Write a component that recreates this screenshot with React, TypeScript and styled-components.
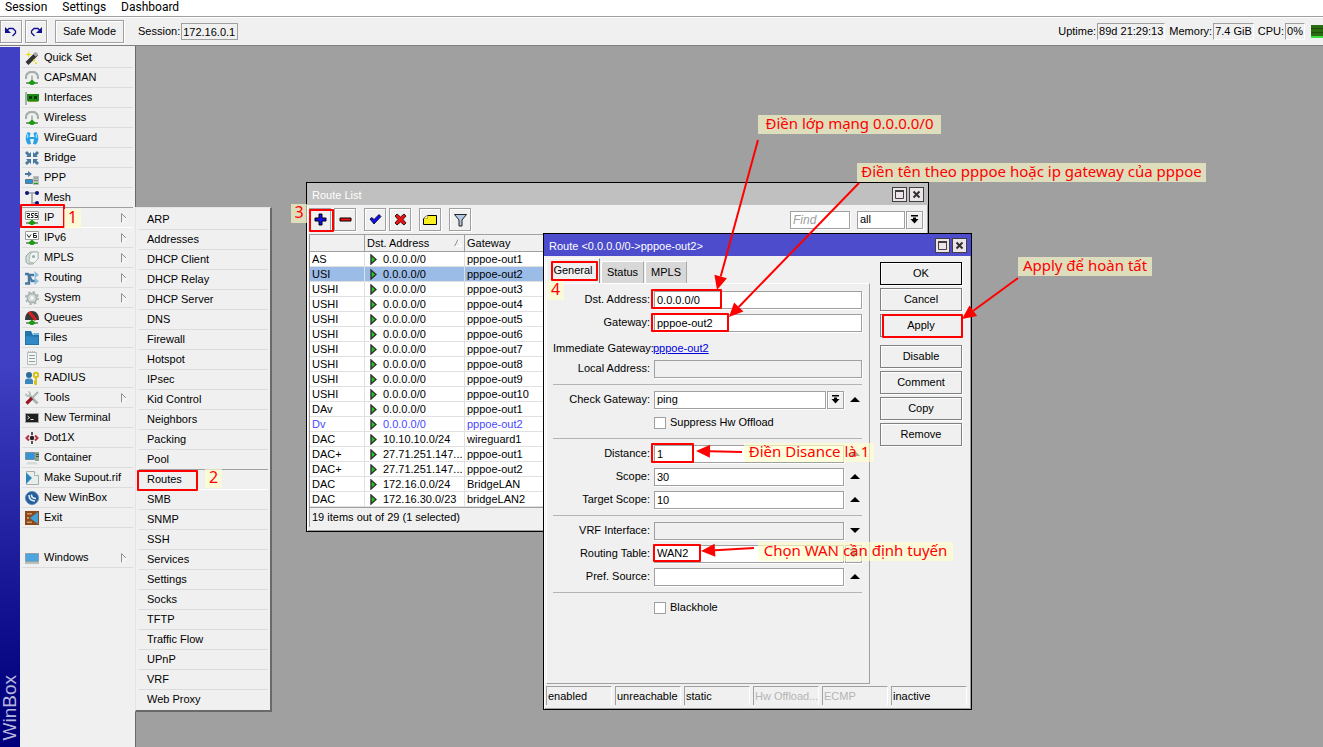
import React from "react";
import styled, { createGlobalStyle, css } from "styled-components";

const GlobalStyle = createGlobalStyle`
  * { box-sizing: border-box; }
  html, body { margin: 0; padding: 0; }
  body, button, input, select, table {
    font-family: "Liberation Sans", Arial, sans-serif;
    font-size: 11px;
    line-height: 15px;
    color: #000;
  }
  button, input, select { margin: 0; padding: 0; border-radius: 0; outline: none; }
`;

const Page = styled.div`
  position: relative;
  display: flex;
  flex-direction: column;
  min-height: 100vh;
  overflow: hidden;
  background: #a0a0a0;
`;

/* ---------- top bars ---------- */

const MenuBar = styled.nav`
  display: flex;
  align-items: flex-start;
  gap: 15px;
  height: 17px;
  padding: 0 5px;
  background: #fff;
  border-bottom: 1px solid #a0a0a0;
`;

const MenuButton = styled.button`
  border: 0;
  background: none;
  font-family: Roboto, sans-serif;
  font-size: 12px;
  line-height: 14px;
`;

const Toolbar = styled.header`
  display: flex;
  align-items: center;
  height: 29px;
  background: #f0f0f0;
  border-top: 1px solid #fff;
  border-bottom: 1px solid #808080;
`;

const bevel = css`
  background: #f0f0f0;
  border: 1px solid #a0a0a0;
  box-shadow: 1px 1px 0 #fff, inset 1px 1px 0 #fff;
`;

const ToolButton = styled.button<{ $w?: number; $gap?: number }>`
  ${bevel}
  display: flex;
  align-items: center;
  justify-content: center;
  flex: none;
  width: ${(p) => p.$w ?? 22}px;
  height: 23px;
  margin-right: ${(p) => p.$gap ?? 3}px;
`;

const Readout = styled.output`
  height: 17px;
  padding: 0 1px;
  border: 1px solid #a0a0a0;
  border-right-color: #fff;
  border-bottom-color: #fff;
  margin: 0 4px 0 1px;
`;

const SessionLabel = styled.label`
  display: flex;
  align-items: center;
`;

const SessionBox = styled.input`
  width: 57px;
  height: 17px;
  margin-left: 1px;
  padding: 0 1px;
  background: #f0f0f0;
  border: 1px solid #a0a0a0;
`;

const StatusGroup = styled.div`
  display: flex;
  align-items: center;
  margin-left: auto;
`;

const CpuGraph = styled.div`
  width: 12px;
  height: 13px;
  margin-left: 2px;
  background: repeating-linear-gradient(#2b6b12 0 3px, #1d4d0c 3px 4px);
  border-bottom: 2px solid #3ee03e;
`;

/* ---------- sidebar ---------- */

const Main = styled.div`
  display: flex;
  flex: 1;
`;

const Rail = styled.div`
  display: flex;
  align-items: flex-end;
  flex: none;
  width: 20px;
  padding-bottom: 7px;
  background: linear-gradient(#4040c4 0 45%, #00007c 95%);
  border-top: 1px solid #f0f0f0;
`;

const RailText = styled.span`
  writing-mode: vertical-rl;
  rotate: 180deg;
  font-size: 19px;
  line-height: 20px;
  color: #b8b8dc;
`;

const Sidebar = styled.nav`
  flex: none;
  width: 115px;
  padding: 2px 2px 0;
  background: #f0f0f0;
`;

const List = styled.ul`
  list-style: none;
  margin: 0;
  padding: 0;
`;

const SideItem = styled.li<{ $active?: boolean; $space?: boolean }>`
  height: 20px;
  margin-top: ${(p) => (p.$space ? 20 : 0)}px;
  border-bottom: 1px solid ${(p) => (p.$active ? "#fff" : "#dcdcdc")};
  box-shadow: ${(p) => (p.$active ? "0 -1px 0 #a0a0a0" : "none")};
`;

const SideButton = styled.button`
  display: flex;
  align-items: center;
  gap: 5px;
  width: 100%;
  height: 19px;
  padding: 0 6px 0 3px;
  border: 0;
  background: none;
  text-align: left;
  white-space: nowrap;
  & > svg:last-child:not(:first-child) { margin-left: auto; flex: none; }
  & > svg:first-child { flex: none; }
`;

const Submenu = styled.div`
  position: absolute;
  left: 135px;
  top: 207px;
  z-index: 3;
  width: 137px;
  padding: 2px 2px 0 3px;
  background: #f0f0f0;
  border: 1px solid #e4e4e4;
  border-right: 2px solid #696969;
  border-bottom: 2px solid #696969;
`;

const SubItem = styled.li<{ $active?: boolean }>`
  height: 20px;
  border-bottom: 1px solid ${(p) => (p.$active ? "#fff" : "#dcdcdc")};
  box-shadow: ${(p) => (p.$active ? "0 -1px 0 #a0a0a0" : "none")};
  &:last-child { border-bottom-color: transparent; }
`;

const SubButton = styled.button`
  width: 100%;
  height: 19px;
  padding-left: 8px;
  border: 0;
  background: none;
  text-align: left;
`;

const Workspace = styled.main`
  position: relative;
  flex: 1;
  background: #a0a0a0;
  border-left: 1px solid #696969;
`;

/* ---------- windows ---------- */

const Win = styled.section<{ $x: number; $y: number; $w: number; $h: number }>`
  position: absolute;
  left: ${(p) => p.$x}px;
  top: ${(p) => p.$y}px;
  width: ${(p) => p.$w}px;
  height: ${(p) => p.$h}px;
  display: flex;
  flex-direction: column;
  background: #f0f0f0;
  border: 1px solid #000;
  box-shadow: inset 1px 1px 0 #fff, inset -1px -1px 0 #a0a0a0;
`;

const TitleBar = styled.header<{ $active?: boolean }>`
  display: flex;
  align-items: center;
  gap: 2px;
  flex: none;
  height: 22px;
  padding: 1px 4px 0 5px;
  color: #fff;
  background: ${(p) => (p.$active ? "#4c4ccc" : "#c0c0c0")};
`;

const Title = styled.h2`
  flex: 1;
  margin: 0;
  padding-top: 2px;
  font-size: 11px;
  font-weight: 400;
`;

const TitleButton = styled.button`
  display: flex;
  align-items: center;
  justify-content: center;
  width: 15px;
  height: 15px;
  background: #ece4e8;
  border: 1px solid #404040;
`;

const ListTools = styled.div`
  display: flex;
  align-items: center;
  flex: none;
  height: 29px;
  padding: 0 5px 0 2px;
`;

const Spacer = styled.div`
  flex: 1;
`;

const box = css`
  height: 18px;
  padding: 0 2px;
  background: #fff;
  border: 1px solid #a0a0a0;
  box-shadow: 1px 1px 0 #fff;
`;

const Find = styled.input`
  ${box}
  width: 60px;
  margin-right: 7px;
  font-size: 12px;
  font-style: italic;
  &::placeholder { color: #a0a0a0; opacity: 1; }
`;

const Select = styled.select<{ $w?: number }>`
  ${box}
  appearance: none;
  flex: ${(p) => (p.$w ? "none" : "1")};
  width: ${(p) => (p.$w ? p.$w + "px" : "auto")};
`;

const DropButton = styled.button`
  ${bevel}
  display: flex;
  align-items: center;
  justify-content: center;
  flex: none;
  width: 17px;
  height: 18px;
  margin-left: 1px;
`;

const TableFrame = styled.div`
  margin: 0 3px 0 2px;
  border-top: 1px solid #a0a0a0;
  border-left: 1px solid #a0a0a0;
  background: #fff;
`;

const Table = styled.table`
  width: 100%;
  table-layout: fixed;
  border-collapse: separate;
  border-spacing: 0;
  th, td {
    padding: 0 2px;
    text-align: left;
    font-weight: 400;
    white-space: nowrap;
    overflow: hidden;
    line-height: 14px;
  }
  th {
    height: 17px;
    background: #f0f0f0;
    border-right: 1px solid #a0a0a0;
    border-bottom: 1px solid #a0a0a0;
  }
  td {
    height: 15px;
    border-right: 1px solid #e0e0e0;
    border-bottom: 1px solid #e0e0e0;
  }
`;

const Row = styled.tr<{ $tone?: string }>`
  color: ${(p) => (p.$tone === "link" ? "#4848ff" : "#000")};
  background: ${(p) => (p.$tone === "selected" ? "#9cbce8" : "#fff")};
`;

const CellLine = styled.span`
  display: flex;
  align-items: center;
  gap: 6px;
  padding-left: 3px;
  & > svg { flex: none; }
`;

const HeadLine = styled.span`
  display: flex;
  align-items: center;
  justify-content: space-between;
`;

const ListStatus = styled.footer`
  height: 20px;
  margin: 0 3px 0 2px;
  padding: 2px 2px 0;
  border-top: 1px solid #a0a0a0;
  border-left: 1px solid #a0a0a0;
`;

/* ---------- route dialog ---------- */

const DialogBody = styled.div`
  display: flex;
  flex: 1;
  padding-left: 2px;
`;

const FormSide = styled.div`
  display: flex;
  flex-direction: column;
  flex: 1;
  padding-top: 2px;
`;

const Tabs = styled.div`
  display: flex;
  align-items: flex-end;
  gap: 1px;
  height: 25px;
`;

const Tab = styled.button<{ $active?: boolean; $w: number }>`
  width: ${(p) => p.$w}px;
  height: ${(p) => (p.$active ? 25 : 22)}px;
  padding-bottom: ${(p) => (p.$active ? 2 : 0)}px;
  border: 0;
  border-top: 1px solid #fff;
  border-left: 1px solid #fff;
  border-right: 1px solid ${(p) => (p.$active ? "#808080" : "#a8a8a8")};
  background: ${(p) => (p.$active ? "#f0f0f0" : "#d8d8d8")};
`;

const Panel = styled.form`
  display: flex;
  flex-direction: column;
  gap: 6px;
  flex: 1;
  padding: 7px 7px 0 6px;
  border: 1px solid #fff;
  border-right-color: #a0a0a0;
  border-bottom-color: #a0a0a0;
`;

const Field = styled.div<{ $low?: boolean }>`
  display: flex;
  align-items: ${(p) => (p.$low ? "flex-end" : "center")};
  height: 17px;
`;

const FieldLabel = styled.label`
  flex: none;
  width: 97px;
  margin-right: 4px;
  text-align: right;
  white-space: nowrap;
`;

const FieldText = styled.span`
  flex: none;
  width: 97px;
  margin-right: 3px;
  text-align: right;
  white-space: nowrap;
  line-height: 11px;
`;

const TextBox = styled.input<{ $off?: boolean }>`
  ${box}
  flex: 1;
  min-width: 0;
  background: ${(p) => (p.$off ? "#f0f0f0" : "#fff")};
`;

const Toggle = styled.button`
  display: flex;
  align-items: center;
  justify-content: center;
  flex: none;
  width: 14px;
  height: 17px;
  margin-left: 4px;
  border: 0;
  background: none;
`;

const GatewayLink = styled.a`
  color: #0000e0;
  line-height: 11px;
`;

const Rule = styled.hr`
  width: 100%;
  height: 2px;
  margin: 0;
  border: 0;
  border-bottom: 1px solid #b4b4b4;
`;

const CheckLabel = styled.label`
  display: flex;
  align-items: center;
  gap: 4px;
  margin-left: 101px;
`;

const Check = styled.input`
  appearance: none;
  width: 12px;
  height: 12px;
  background: #fff;
  border: 1px solid #a0a0a0;
`;

const Actions = styled.div`
  display: flex;
  flex-direction: column;
  gap: 3px;
  flex: none;
  width: 101px;
  padding: 6px 9px 0 10px;
`;

const Action = styled.button<{ $default?: boolean; $space?: boolean }>`
  ${bevel}
  height: 23px;
  margin-top: ${(p) => (p.$space ? 5 : 0)}px;
  border-color: ${(p) => (p.$default ? "#000" : "#808080")};
`;

const Statuses = styled.footer`
  display: flex;
  gap: 3px;
  height: 25px;
  padding: 2px 4px 4px 2px;
`;

const StatusCell = styled.span<{ $dim?: boolean; $last?: boolean }>`
  flex: ${(p) => (p.$last ? "1" : "none")};
  width: 66px;
  padding: 2px 1px 0;
  overflow: hidden;
  white-space: nowrap;
  color: ${(p) => (p.$dim ? "#b4b4b4" : "#000")};
  border: 1px solid #a0a0a0;
  border-right-color: #fff;
  border-bottom: 0;
`;

/* ---------- callouts ---------- */

const Note = styled.div<{ $x: number; $y: number; $w: number }>`
  position: absolute;
  left: ${(p) => p.$x}px;
  top: ${(p) => p.$y}px;
  z-index: 5;
  width: ${(p) => p.$w}px;
  height: 19px;
  text-align: center;
  font-family: "Noto Sans", sans-serif;
  font-size: ${(p) => (p.$w < 20 ? 16 : 15)}px;
  line-height: 17px;
  white-space: nowrap;
  color: #f00;
  background: rgba(255, 255, 204, 0.65);
`;

const Mark = styled.div<{ $x: number; $y: number; $w: number; $h: number }>`
  position: absolute;
  left: ${(p) => p.$x}px;
  top: ${(p) => p.$y}px;
  z-index: 4;
  width: ${(p) => p.$w}px;
  height: ${(p) => p.$h}px;
  border: 2px solid #f00;
  border-radius: 1px;
  pointer-events: none;
`;

const ArrowLayer = styled.svg`
  position: absolute;
  left: 0;
  top: 0;
  z-index: 6;
  width: 100%;
  height: 100%;
  pointer-events: none;
`;

/* ---------- icons ---------- */

const stand = (
  <>
    <path d="M1 12h12" stroke="#8c9490" strokeWidth="2" />
    <path d="M7 8.500l4 3.500-3 2H6l-3-2z" fill="#1c9a12" />
  </>
);
const arc = (
  <>
    <path d="M1 8V6a6 5.200 0 0 1 12 0v2" fill="none" stroke="#a4b0ac" strokeWidth="2.200" />
    <path d="M7 4.500V10" stroke="#b4bcb8" strokeWidth="2" />
    {stand}
  </>
);
const plug = (
  <>
    {stand}
    <path d="M.500.500h13v8H.500z" fill="#fff" stroke="#98a098" />
  </>
);
const icons: Record<string, React.ReactNode> = {
  "Quick Set": (
    <>
      <path d="M2 12.500L11.500 3" stroke="#333" strokeWidth="4" />
      <path d="M9.500 4.500l2.500-2.500" stroke="#aaa" strokeWidth="3.500" />
      <path d="M3.500 0l.8 2.700 2.700.8-2.700.8-.8 2.700-.8-2.700L0 3.500l2.700-.8z" fill="#e8dc20" />
      <path d="M8 8.500h2v2H8zM10 11.500h2v1.500h-2z" fill="#e8dc20" />
    </>
  ),
  CAPsMAN: arc,
  Interfaces: (
    <>
      <path d="M1 1v13" stroke="#a8b4ac" strokeWidth="2" />
      <path d="M2 3h12v7H2z" fill="#1d8a1a" />
      <path d="M4 5h3v3H4zM9 5h3v3H9z" fill="#0c3c0c" />
      <path d="M3 10h10v1H3z" fill="#7c9c30" />
    </>
  ),
  Wireless: arc,
  WireGuard: (
    <>
      <path d="M3 1C0 4 0 10 3 13.500L6 13 5 8h4l-1 5 3 .5c3-3.500 3-9.500 0-12.500L8.500 2 9.500 6h-5L5.500 2z" fill="#28a0e8" />
      <path d="M2.500 3v4M11.500 3v4" stroke="#8cdcff" strokeWidth="1.500" />
    </>
  ),
  Bridge: (
    <path
      d="M0 2l2-2 2.500 2.500L6 1v5H1l1.500-1.500zM14 2l-2-2-2.500 2.500L8 1v5h5l-1.500-1.500zM0 12l2 2 2.500-2.500L6 13V8H1l1.500 1.500zM14 12l-2 2-2.500-2.500L8 13V8h5l-1.500 1.500z"
      fill="#4878a0"
    />
  ),
  PPP: (
    <>
      <path d="M0 2h3V0l4 3-4 3V4H0z" fill="#4878a0" />
      <path d="M8 5h6v9H8z" fill="#b8c0bc" />
      <path d="M9 7h4M9 9.500h4" stroke="#888" />
      <path d="M9 12.500h4" stroke="#1ca012" />
      <path d="M.500 8.500h7v4h-7z" fill="#2890d8" stroke="#687880" />
    </>
  ),
  Mesh: (
    <>
      <path d="M3 2h9M7 2v10h5" fill="none" stroke="#a8b0b0" strokeWidth="2" />
      <circle cx="2" cy="2" r="2" fill="#101080" />
      <circle cx="12" cy="2" r="2" fill="#101080" />
      <circle cx="12" cy="12" r="2" fill="#101080" />
    </>
  ),
  IP: (
    <>
      {plug}
      <path d="M1.500 2.500h3v2h-2v2h2.500M9 2.500H6.500v2H8v2H5.800M12.500 2.500H10v2h2.500v2H9.500" fill="none" stroke="#222" />
    </>
  ),
  IPv6: (
    <>
      {plug}
      <path d="M2 3.500l2 3 2-3M11.500 2.500h-3v4h3v-2H9" fill="none" stroke="#222" />
    </>
  ),
  MPLS: (
    <>
      <path d="M1 5l4-4h8v7l-5 5H3l-2-2z" fill="#d4dcd8" stroke="#98a8a4" />
      <path d="M5 3l3-2h5v7l-4 4-5-1z" fill="#f0f4f2" stroke="#b0bcb8" />
      <circle cx="8.500" cy="5.500" r="1.500" fill="#98a8a4" />
    </>
  ),
  Routing: (
    <>
      <path d="M0 12.500h4V4h5" fill="none" stroke="#4878a0" strokeWidth="2.500" />
      <path d="M0 3h3l4 7h3" fill="none" stroke="#4878a0" strokeWidth="2.500" />
      <path d="M9.500 0L14 4l-4.500 3.500zM9.500 6.500L14 10l-4.500 4z" fill="#88bce0" />
    </>
  ),
  System: (
    <>
      <circle cx="7" cy="7" r="4.500" fill="none" stroke="#a8b4b0" strokeWidth="2" />
      <circle cx="7" cy="7" r="6.200" fill="none" stroke="#a8b4b0" strokeWidth="1.600" strokeDasharray="2.400 2.470" />
      <circle cx="7" cy="7" r="2.500" fill="#f8f8f8" stroke="#c4ccc8" />
    </>
  ),
  Queues: (
    <>
      <path d="M0 9C0 3 3 0 7 0s7 3 7 9z" fill="#383838" />
      <path d="M4 1l7 8" stroke="#d82020" strokeWidth="3" />
      {stand}
    </>
  ),
  Files: (
    <>
      <path d="M0 0h6l2 4h6v10H0z" fill="#2474ac" />
      <path d="M8 2h6v2H9z" fill="#70b4e0" />
      <path d="M1 5l12 1v7H1z" fill="#3088c4" />
    </>
  ),
  Log: (
    <>
      <path d="M2.500 1.500h9v12h-9z" fill="#f4f8f6" stroke="#b0bcb8" />
      <path d="M4 4.500h6M4 7.500h6M4 10.500h6" stroke="#909c98" />
      <path d="M3.500 0v2M5.500 0v2M7.500 0v2M9.500 0v2" stroke="#b0bcb8" />
    </>
  ),
  RADIUS: (
    <>
      <circle cx="4" cy="4" r="3" fill="#2c6c9c" />
      <path d="M0 13V9l2-1.500h4L8 9v4z" fill="#3c88bc" />
      <circle cx="11" cy="4" r="2.200" fill="none" stroke="#d8c010" strokeWidth="2" />
      <path d="M11 6v8M11 10.500h-2M11 12.500h-2" stroke="#d8c010" strokeWidth="1.800" />
    </>
  ),
  Tools: (
    <>
      <path d="M4 4l8.500 8.500" stroke="#a8b4b0" strokeWidth="2.800" />
      <path d="M0 2v2l2 2h3l1-1V2L4 0H3l1 3-1 1z" fill="#b4c0bc" />
      <path d="M13 1L7 7" stroke="#a8b4b0" strokeWidth="2" />
      <path d="M7 7l-5.500 5.500" stroke="#981828" strokeWidth="3.200" />
    </>
  ),
  "New Terminal": (
    <>
      <path d="M.500 2.500h13v9H.500z" fill="#202020" stroke="#a0a8a4" />
      <path d="M2.500 5l2 1.500-2 1.500M5.500 8.500h3" fill="none" stroke="#e8e8e8" />
    </>
  ),
  Dot1X: (
    <>
      <path d="M4 4.500L1.500 7 4 9.500M10 4.500L12.500 7 10 9.500" fill="none" stroke="#b83040" strokeWidth="2" />
      <circle cx="7" cy="7" r="2.200" fill="#222" />
      <path d="M7 1v3M7 10v3" stroke="#555" strokeWidth="2" />
    </>
  ),
  Container: (
    <>
      <path d="M.500 1.500h9v7h-9z" fill="#3494d8" stroke="#78909c" />
      <path d="M10 1h4v9h-4z" fill="#88a098" />
      <path d="M11 3.500h3M11 5.500h3" stroke="#40584c" />
      <path d="M3 11h8l2 2.500H1z" fill="#d4dcd8" />
    </>
  ),
  "Make Supout.rif": (
    <>
      <path d="M1.500.500h8l4 4v9h-12z" fill="#e8eeec" stroke="#a0b0ac" />
      <path d="M9.500.500v4h4" fill="#fff" stroke="#a0b0ac" />
      <path d="M1 1.500L7 7l-6 6z" fill="#2c84bc" />
    </>
  ),
  "New WinBox": (
    <>
      <circle cx="7" cy="7" r="6.500" fill="#245c9c" stroke="#5c88b8" />
      <path d="M4 4c0 4 2 6 6 6M6.500 3.500c0 3 1.500 4 4.500 4" fill="none" stroke="#e0ecf8" strokeWidth="1.600" />
    </>
  ),
  Exit: (
    <>
      <path d="M0 0h14v14H0z" fill="#8c4818" />
      <path d="M2 2h5v1.500H2zM2 10.500h5V12H2zM2 6h2v2H2z" fill="#c89870" />
      <path d="M13 1v12L5 7z" fill="#40a0dc" />
    </>
  ),
  Windows: (
    <>
      <path d="M.500 2.500h13v8H.500z" fill="#4ca4e0" stroke="#90a0a8" />
      <path d="M0 12h14" stroke="#b8c0bc" strokeWidth="2" />
    </>
  ),
};

const Glyph = ({ name }: { name: string }) => (
  <svg width="14" height="14" viewBox="0 0 14 14" aria-hidden="true">
    {icons[name]}
  </svg>
);

const MoreArrow = () => (
  <svg width="6" height="10" viewBox="0 0 6 10" aria-hidden="true">
    <path d="M.500 9.500V.500L5 5" fill="none" stroke="#909090" />
    <path d="M1 9.500L5.500 5" stroke="#fff" />
  </svg>
);

const DropIcon = () => (
  <svg width="9" height="9" viewBox="0 0 9 9" aria-hidden="true">
    <path d="M1 0h7v1.400H1zM3 2.500h3V4h2.500L4.500 8.500.500 4H3z" />
  </svg>
);

const Tri = ({ down }: { down?: boolean }) => (
  <svg width="10" height="5" viewBox="0 0 10 5" aria-hidden="true">
    <path d={down ? "M0 0h10L5 5z" : "M0 5h10L5 0z"} />
  </svg>
);

const Play = () => (
  <svg width="7" height="11" viewBox="0 0 7 11" aria-hidden="true">
    <path d="M1 1l5 4.500L1 10z" fill="#20c820" stroke="#303030" strokeWidth="1.400" />
  </svg>
);

const WindowButtons = () => (
  <>
    <TitleButton type="button" aria-label="Maximize">
      <svg width="9" height="9" viewBox="0 0 9 9">
        <path d="M.500 1h8v7.500h-8z" fill="none" stroke="#404040" />
        <path d="M0 1h9" stroke="#404040" strokeWidth="2" />
      </svg>
    </TitleButton>
    <TitleButton type="button" aria-label="Close">
      <svg width="9" height="9" viewBox="0 0 9 9">
        <path d="M1.500 1.500l6 6M7.500 1.500l-6 6" stroke="#303030" strokeWidth="2" />
      </svg>
    </TitleButton>
  </>
);

/* ---------- data ---------- */

const sideItems = [
  "Quick Set", "CAPsMAN", "Interfaces", "Wireless", "WireGuard", "Bridge", "PPP", "Mesh",
  "IP", "IPv6", "MPLS", "Routing", "System", "Queues", "Files", "Log", "RADIUS", "Tools",
  "New Terminal", "Dot1X", "Container", "Make Supout.rif", "New WinBox", "Exit", "Windows",
];
const withMenu = ["IP", "IPv6", "MPLS", "Routing", "System", "Tools", "Windows"];

const ipItems = [
  "ARP", "Addresses", "DHCP Client", "DHCP Relay", "DHCP Server", "DNS", "Firewall", "Hotspot",
  "IPsec", "Kid Control", "Neighbors", "Packing", "Pool", "Routes", "SMB", "SNMP", "SSH",
  "Services", "Settings", "Socks", "TFTP", "Traffic Flow", "UPnP", "VRF", "Web Proxy",
];

const routes: [string, string, string, string?][] = [
  ["AS", "0.0.0.0/0", "pppoe-out1"],
  ["USI", "0.0.0.0/0", "pppoe-out2", "selected"],
  ["USHI", "0.0.0.0/0", "pppoe-out3"],
  ["USHI", "0.0.0.0/0", "pppoe-out4"],
  ["USHI", "0.0.0.0/0", "pppoe-out5"],
  ["USHI", "0.0.0.0/0", "pppoe-out6"],
  ["USHI", "0.0.0.0/0", "pppoe-out7"],
  ["USHI", "0.0.0.0/0", "pppoe-out8"],
  ["USHI", "0.0.0.0/0", "pppoe-out9"],
  ["USHI", "0.0.0.0/0", "pppoe-out10"],
  ["DAv", "0.0.0.0/0", "pppoe-out1"],
  ["Dv", "0.0.0.0/0", "pppoe-out2", "link"],
  ["DAC", "10.10.10.0/24", "wireguard1"],
  ["DAC+", "27.71.251.147...", "pppoe-out1"],
  ["DAC+", "27.71.251.147...", "pppoe-out2"],
  ["DAC", "172.16.0.0/24", "BridgeLAN"],
  ["DAC", "172.16.30.0/23", "bridgeLAN2"],
];

const notes = [
  { x: 758, y: 115, w: 183, text: "Điền lớp mạng 0.0.0.0/0" },
  { x: 857, y: 163, w: 349, text: "Điền tên theo pppoe hoặc ip gateway của pppoe" },
  { x: 1018, y: 257, w: 134, text: "Apply để hoàn tất" },
  { x: 744, y: 443, w: 130, text: "Điền Disance là 1" },
  { x: 758, y: 542, w: 195, text: "Chọn WAN cần định tuyến" },
  { x: 64, y: 209, w: 17, text: "1" },
  { x: 205, y: 469, w: 17, text: "2" },
  { x: 291, y: 204, w: 16, text: "3" },
  { x: 547, y: 281, w: 17, text: "4" },
];

const marks = [
  { x: 20, y: 204, w: 45, h: 24 },
  { x: 137, y: 470, w: 61, h: 21 },
  { x: 309, y: 209, w: 25, h: 23 },
  { x: 551, y: 261, w: 47, h: 20 },
  { x: 651, y: 289, w: 71, h: 20 },
  { x: 651, y: 313, w: 78, h: 19 },
  { x: 651, y: 443, w: 43, h: 20 },
  { x: 653, y: 544, w: 48, h: 18 },
  { x: 882, y: 314, w: 81, h: 24 },
];

const arrows: [number, number, number, number][] = [
  [758, 140, 717, 290],
  [859, 183, 729, 317],
  [1018, 278, 962, 319],
  [742, 452, 696, 451],
  [754, 548, 701, 551],
];

const Arrow = ({ line }: { line: [number, number, number, number] }) => {
  const [x1, y1, x2, y2] = line;
  const len = Math.hypot(x2 - x1, y2 - y1);
  const ux = (x2 - x1) / len;
  const uy = (y2 - y1) / len;
  const bx = x2 - ux * 14;
  const by = y2 - uy * 14;
  return (
    <g fill="#f00" stroke="none">
      <line x1={x1} y1={y1} x2={bx} y2={by} stroke="#f00" strokeWidth="2" />
      <polygon points={`${x2},${y2} ${bx - uy * 6.5},${by + ux * 6.5} ${bx + uy * 6.5},${by - ux * 6.5}`} />
    </g>
  );
};

const NumberField = ({ id, label, value, off, down }: { id: string; label: string; value: string; off?: boolean; down?: boolean }) => (
  <Field>
    <FieldLabel htmlFor={id}>{label}</FieldLabel>
    <TextBox id={id} defaultValue={value} $off={off} />
    <Toggle type="button" aria-label={`Toggle ${label}`}>
      <Tri down={down} />
    </Toggle>
  </Field>
);

/* ---------- windows content ---------- */

const RouteList = () => (
  <Win $x={170} $y={136} $w={623} $h={350} aria-label="Route List">
    <TitleBar>
      <Title>Route List</Title>
      <WindowButtons />
    </TitleBar>
    <ListTools>
      <ToolButton aria-label="Add">
        <svg width="13" height="13" viewBox="0 0 13 13">
          <path d="M5 1h3v4h4v3H8v4H5V8H1V5h4z" fill="#1010f0" stroke="#000" />
        </svg>
      </ToolButton>
      <ToolButton aria-label="Remove" $gap={8}>
        <svg width="13" height="13" viewBox="0 0 13 13">
          <path d="M1 5h11v3H1z" fill="#f01010" stroke="#000" />
        </svg>
      </ToolButton>
      <ToolButton aria-label="Enable">
        <svg width="13" height="13" viewBox="0 0 13 13">
          <path d="M1 6l2-1.500 2 2 5-5L12 3.500l-7 7.500z" fill="#1010f0" stroke="#000" strokeWidth=".8" />
        </svg>
      </ToolButton>
      <ToolButton aria-label="Disable" $gap={8}>
        <svg width="13" height="13" viewBox="0 0 13 13">
          <path d="M3 1l3.500 3L10 1l2 2-3 3.500 3 3.500-2 2-3.500-3L3 12l-2-2 3-3.500L1 3z" fill="#f01010" stroke="#000" strokeWidth=".8" />
        </svg>
      </ToolButton>
      <ToolButton aria-label="Comment" $gap={8}>
        <svg width="14" height="12" viewBox="0 0 14 12">
          <path d="M4.500 1.500h9v9H.500v-6z" fill="#f8f020" stroke="#000" />
          <path d="M4.500 1.500v3h-4" fill="#fff" stroke="#a89000" strokeWidth=".7" />
        </svg>
      </ToolButton>
      <ToolButton aria-label="Filter">
        <svg width="13" height="14" viewBox="0 0 13 14">
          <path d="M.500 1.500h12L8 7v6H5V7z" fill="#b0c8e4" stroke="#222" />
        </svg>
      </ToolButton>
      <Spacer />
      <Find placeholder="Find" aria-label="Find" />
      <Select $w={48} aria-label="Filter column">
        <option>all</option>
      </Select>
      <DropButton aria-label="Open filter">
        <DropIcon />
      </DropButton>
    </ListTools>
    <TableFrame>
      <Table>
        <colgroup>
          <col style={{ width: 55 }} />
          <col style={{ width: 100 }} />
          <col />
        </colgroup>
        <thead>
          <tr>
            <th aria-label="Flags" />
            <th>
              <HeadLine>
                Dst. Address
                <svg width="8" height="8" viewBox="0 0 8 8" aria-hidden="true">
                  <path d="M.500 7.500L4 .500" stroke="#909090" />
                  <path d="M4 .500L7.500 7.500h-7" fill="none" stroke="#fff" />
                </svg>
              </HeadLine>
            </th>
            <th>Gateway</th>
          </tr>
        </thead>
        <tbody>
          {routes.map(([flags, dst, gw, tone], i) => (
            <Row key={i} $tone={tone}>
              <td>{flags}</td>
              <td>
                <CellLine>
                  <Play />
                  {dst}
                </CellLine>
              </td>
              <td>{gw}</td>
            </Row>
          ))}
        </tbody>
      </Table>
    </TableFrame>
    <ListStatus>19 items out of 29 (1 selected)</ListStatus>
  </Win>
);

const RouteDialog = () => (
  <Win $x={407} $y={187} $w={429} $h={477} aria-label="Route">
    <TitleBar $active>
      <Title>Route &lt;0.0.0.0/0-&gt;pppoe-out2&gt;</Title>
      <WindowButtons />
    </TitleBar>
    <DialogBody>
      <FormSide>
        <Tabs>
          <Tab $active $w={54}>General</Tab>
          <Tab $w={43}>Status</Tab>
          <Tab $w={42}>MPLS</Tab>
        </Tabs>
        <Panel>
          <Field>
            <FieldLabel htmlFor="dst">Dst. Address:</FieldLabel>
            <TextBox id="dst" defaultValue="0.0.0.0/0" />
          </Field>
          <Field>
            <FieldLabel htmlFor="gateway">Gateway:</FieldLabel>
            <TextBox id="gateway" defaultValue="pppoe-out2" />
          </Field>
          <Field $low>
            <FieldText>Immediate Gateway:</FieldText>
            <GatewayLink href="#pppoe-out2">pppoe-out2</GatewayLink>
          </Field>
          <Field>
            <FieldLabel htmlFor="local">Local Address:</FieldLabel>
            <TextBox id="local" readOnly $off />
          </Field>
          <Rule />
          <Field>
            <FieldLabel htmlFor="check">Check Gateway:</FieldLabel>
            <Select id="check">
              <option>ping</option>
            </Select>
            <DropButton type="button" aria-label="Open check gateway">
              <DropIcon />
            </DropButton>
            <Toggle type="button" aria-label="Collapse check gateway">
              <Tri />
            </Toggle>
          </Field>
          <Field>
            <CheckLabel>
              <Check type="checkbox" />
              Suppress Hw Offload
            </CheckLabel>
          </Field>
          <Rule />
          <NumberField id="distance" label="Distance:" value="1" />
          <NumberField id="scope" label="Scope:" value="30" />
          <NumberField id="target" label="Target Scope:" value="10" />
          <Rule />
          <NumberField id="vrf" label="VRF Interface:" value="" off down />
          <Field>
            <FieldLabel htmlFor="table">Routing Table:</FieldLabel>
            <Select id="table">
              <option>WAN2</option>
            </Select>
            <DropButton type="button" aria-label="Open routing table">
              <DropIcon />
            </DropButton>
          </Field>
          <NumberField id="source" label="Pref. Source:" value="" />
          <Rule />
          <Field>
            <CheckLabel>
              <Check type="checkbox" />
              Blackhole
            </CheckLabel>
          </Field>
        </Panel>
      </FormSide>
      <Actions>
        <Action $default>OK</Action>
        <Action>Cancel</Action>
        <Action>Apply</Action>
        <Action $space>Disable</Action>
        <Action>Comment</Action>
        <Action>Copy</Action>
        <Action>Remove</Action>
      </Actions>
    </DialogBody>
    <Statuses>
      <StatusCell>enabled</StatusCell>
      <StatusCell>unreachable</StatusCell>
      <StatusCell>static</StatusCell>
      <StatusCell $dim>Hw Offload...</StatusCell>
      <StatusCell $dim>ECMP</StatusCell>
      <StatusCell $last>inactive</StatusCell>
    </Statuses>
  </Win>
);

export default function App() {
  return (
    <Page>
      <GlobalStyle />
      <MenuBar>
        <MenuButton>Session</MenuButton>
        <MenuButton>Settings</MenuButton>
        <MenuButton>Dashboard</MenuButton>
      </MenuBar>
      <Toolbar>
        <ToolButton aria-label="Undo">
          <svg width="12" height="11" viewBox="0 0 12 11">
            <path d="M2 4.500L4 2.500h4l2.500 2.500v2L7.500 10" fill="none" stroke="#101090" strokeWidth="1.300" />
            <path d="M0 1v6h6z" fill="#101090" />
          </svg>
        </ToolButton>
        <ToolButton aria-label="Redo" $gap={8}>
          <svg width="12" height="11" viewBox="0 0 12 11">
            <path d="M10 4.500L8 2.500H4L1.500 5v2L4.500 10" fill="none" stroke="#101090" strokeWidth="1.300" />
            <path d="M12 1v6H6z" fill="#101090" />
          </svg>
        </ToolButton>
        <ToolButton $w={69} $gap={14}>Safe Mode</ToolButton>
        <SessionLabel>
          Session:
          <SessionBox defaultValue="172.16.0.1" readOnly />
        </SessionLabel>
        <StatusGroup>
          Uptime:<Readout>89d 21:29:13</Readout>
          Memory:<Readout>7.4 GiB</Readout>
          CPU:<Readout>0%</Readout>
          <CpuGraph />
        </StatusGroup>
      </Toolbar>
      <Main>
        <Rail>
          <RailText>WinBox</RailText>
        </Rail>
        <Sidebar>
          <List>
            {sideItems.map((name) => (
              <SideItem key={name} $active={name === "IP"} $space={name === "Windows"}>
                <SideButton>
                  <Glyph name={name} />
                  {name}
                  {withMenu.includes(name) && <MoreArrow />}
                </SideButton>
              </SideItem>
            ))}
          </List>
        </Sidebar>
        <Workspace>
          <RouteList />
          <RouteDialog />
        </Workspace>
      </Main>
      <Submenu>
        <List>
          {ipItems.map((name) => (
            <SubItem key={name} $active={name === "Routes"}>
              <SubButton>{name}</SubButton>
            </SubItem>
          ))}
        </List>
      </Submenu>
      {marks.map((m, i) => (
        <Mark key={i} $x={m.x} $y={m.y} $w={m.w} $h={m.h} />
      ))}
      {notes.map((n) => (
        <Note key={n.text} $x={n.x} $y={n.y} $w={n.w}>
          {n.text}
        </Note>
      ))}
      <ArrowLayer aria-hidden="true">
        {arrows.map((line, i) => (
          <Arrow key={i} line={line} />
        ))}
      </ArrowLayer>
    </Page>
  );
}
